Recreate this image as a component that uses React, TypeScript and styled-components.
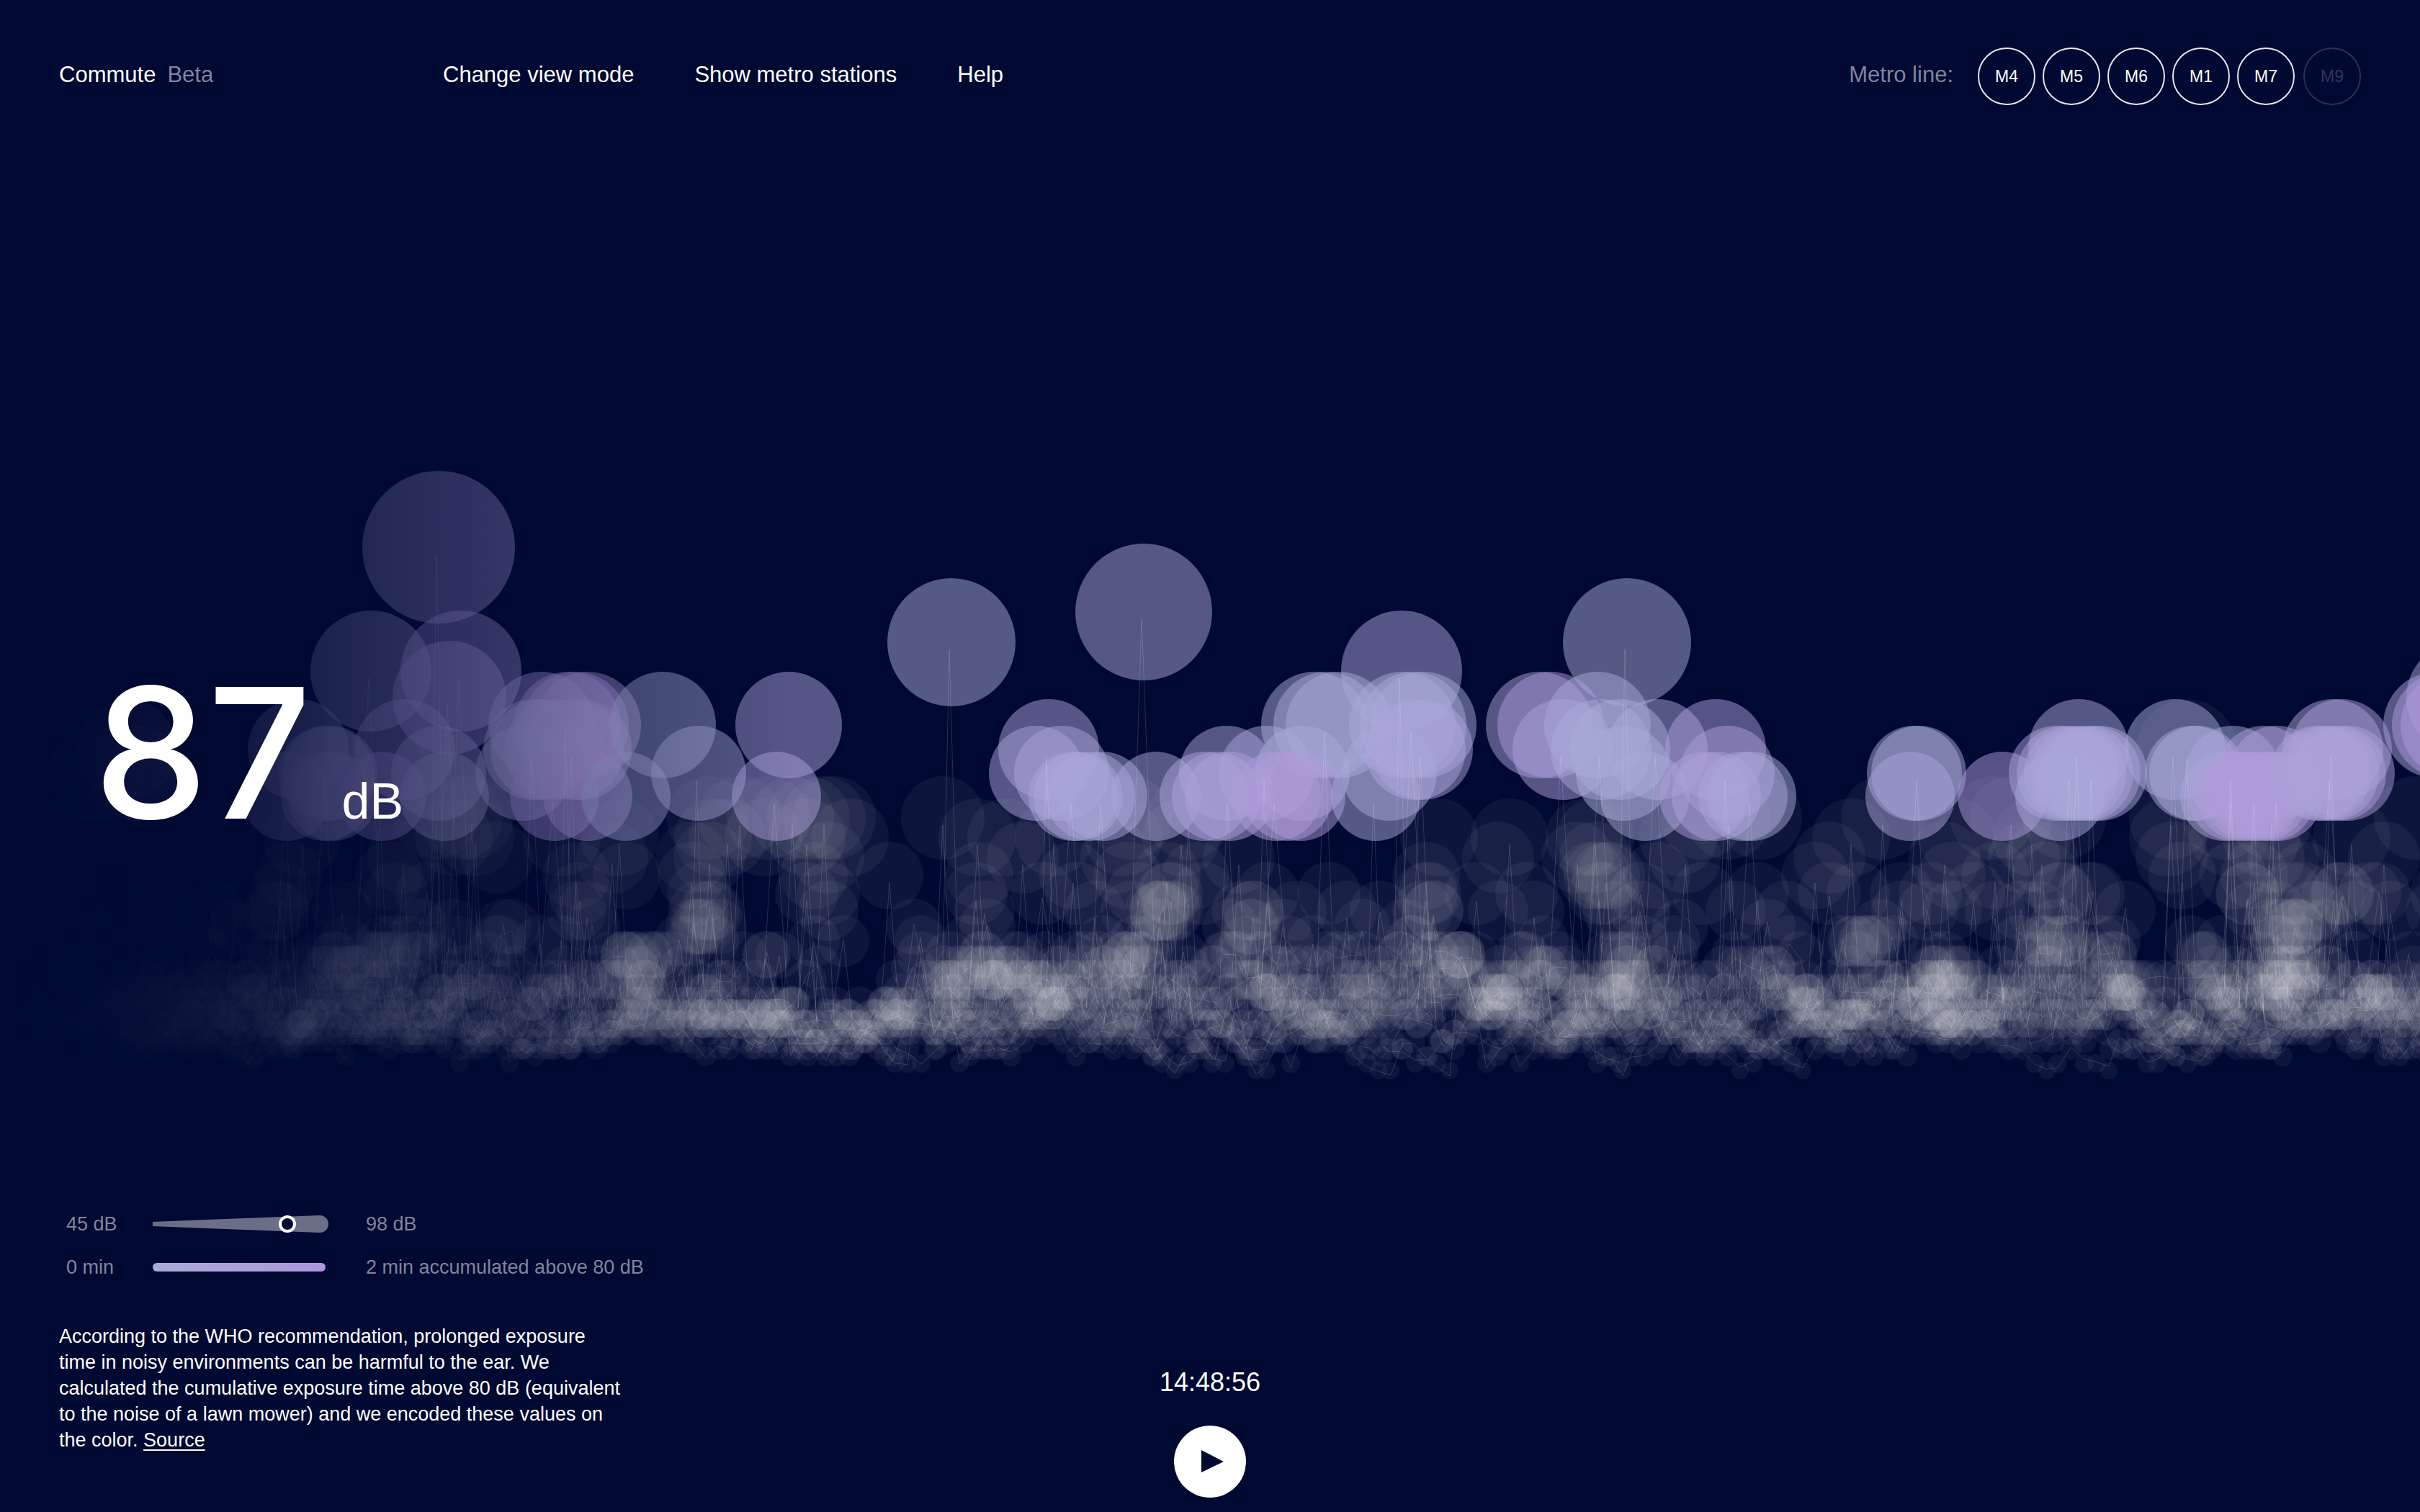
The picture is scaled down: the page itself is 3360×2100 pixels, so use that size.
import React, { useState } from "react";
import styled, { createGlobalStyle } from "styled-components";

const NIGHT = "#000932";
const MUTED = "#80849a";

const GlobalStyle = createGlobalStyle`
  *, *::before, *::after { box-sizing: border-box; }
  body {
    margin: 0;
    background: ${NIGHT};
    color: #fff;
    font-family: "Liberation Sans", Arial, sans-serif;
    font-size: 27px;
    line-height: 36px;
  }
`;

const Page = styled.div`
  min-height: 100vh;
  display: flex;
  flex-direction: column;
`;

const Header = styled.header`
  display: flex;
  align-items: center;
  padding: 66px 82px 0;
  font-size: 31px;
`;

const Brand = styled.div`
  width: 533px;
  display: flex;
  gap: 16px;
  padding-bottom: 4px;
`;

const Faint = styled.span`
  color: ${MUTED};
`;

const Nav = styled.nav`
  display: flex;
  flex: 1;
  gap: 84px;
  padding-bottom: 4px;
`;

const NavButton = styled.button`
  padding: 0;
  border: 0;
  background: none;
  color: inherit;
  font: inherit;
  cursor: pointer;
`;

const Lines = styled.div`
  display: flex;
  align-items: center;
  gap: 10px;
`;

const LinesLabel = styled(Faint)`
  margin-right: 24px;
  padding-bottom: 4px;
`;

const LineButton = styled.button`
  width: 80px;
  height: 80px;
  padding: 0;
  border: 2px solid #e6e7ec;
  border-radius: 50%;
  background: none;
  color: #fff;
  font-family: inherit;
  font-size: 23px;
  cursor: pointer;

  &:disabled {
    margin-left: 2px;
    border-color: #2b3254;
    color: #2f3657;
    cursor: default;
  }
`;

const Stage = styled.main`
  display: grid;

  & > * { grid-area: 1 / 1; }
`;

const Chart = styled.svg`
  display: block;
  width: 100%;
  height: auto;
`;

const Readout = styled.p`
  display: flex;
  align-items: baseline;
  gap: 42px;
  margin: 0;
  padding: 772px 0 0 130px;
  align-self: start;
  font-family: Inter, "Liberation Sans", sans-serif;
  font-size: 252px;
  font-weight: 500;
  line-height: 256px;
`;

const Unit = styled.span`
  font-family: "Liberation Sans", Arial, sans-serif;
  font-size: 70px;
  font-weight: 400;
  line-height: 70px;
`;

const Footer = styled.footer`
  margin-top: auto;
  display: grid;
  grid-template-columns: 1fr auto 1fr;
  align-items: end;
  padding: 0 82px 20px;
`;

const Notes = styled.section`
  padding-bottom: 62px;
`;

const Legend = styled.dl`
  display: grid;
  grid-template-columns: 120px 240px auto;
  grid-auto-rows: 36px;
  row-gap: 24px;
  align-items: center;
  justify-content: start;
  margin: 0 0 60px;
  padding-left: 10px;
  color: ${MUTED};
`;

const LegendStart = styled.dt``;

const LegendScale = styled.dd`
  margin: 0;
`;

const LegendEnd = styled.dd`
  margin: 0;
  padding-left: 56px;
`;

const ScaleDrawing = styled.svg`
  display: block;
  width: 244px;
  height: 28px;
`;

const Exposure = styled.p`
  margin: 0;
  max-width: 784px;
`;

const SourceLink = styled.a`
  color: inherit;
  text-decoration-thickness: 2px;
  text-underline-offset: 4px;
`;

const Player = styled.section`
  display: flex;
  flex-direction: column;
  align-items: center;
  gap: 40px;
`;

const Clock = styled.time`
  font-size: 36px;
  line-height: 40px;
`;

const PlayButton = styled.button`
  display: grid;
  place-items: center;
  width: 100px;
  height: 100px;
  padding: 0;
  border: 0;
  border-radius: 50%;
  background: #fff;
  cursor: pointer;
`;

/* Every loudness level has one height and one radius, loudest first. */
const LEVELS: [number, number][] = [
  [760, 106], [805, 100], [850, 95], [892, 89], [932, 84], [969, 79],
  [1007, 74], [1041, 70], [1074, 66], [1106, 62], [1136, 58], [1163, 54],
  [1191, 50], [1216, 47], [1241, 44], [1265, 42], [1287, 39], [1307, 36],
  [1326, 33], [1344, 31], [1361, 28], [1378, 26], [1394, 24], [1409, 22],
  [1422, 20], [1434, 18], [1446, 17], [1457, 15], [1467, 14], [1477, 13],
  [1487, 12], [1497, 11],
];

/* Points above 80 dB: level, x, accumulated exposure from 0 to 1. */
const LOUD: [number, number, number][] = [
  [0, 609, 0.6],
  [4, 515, 0.3], [4, 640, 0.7], [5, 624, 0.7],
  [7, 176, 0.3], [8, 132, 0.3], [8, 190, 0.3],
  [7, 414, 0.2], [7, 562, 0.6], [8, 453, 0.3], [8, 458, 0.3], [8, 609, 0.4],
  [9, 398, 0.5], [9, 452, 0.5], [9, 462, 0.3], [9, 530, 0.9], [9, 617, 0.3],
  [6, 752, 0.5], [6, 788, 1], [6, 799, 0.9], [6, 816, 1], [7, 741, 0.3],
  [7, 751, 0.5], [7, 770, 0.6], [7, 796, 0.4], [7, 807, 0.9],
  [8, 726, 0.3], [9, 770, 1], [9, 816, 1], [6, 920, 0], [8, 970, 0.2],
  [9, 869, 0.2], [6, 1095, 0.4], [9, 1078, 0.5],
  [3, 1321, 0.1], [2, 1588, 0.3], [7, 1456, 0.4], [8, 1439, 0.4],
  [8, 1474, 0.4], [9, 1490, 0.4], [9, 1497, 0.3], [9, 1514, 0.3],
  [9, 1531, 0.2], [9, 1605, 0.3], [8, 1703, 0.3], [8, 1758, 0.3],
  [9, 1672, 0.3], [9, 1689, 0.5], [9, 1707, 0.6],
  [4, 1946, 0.4], [6, 1825, 0], [6, 1842, 0.1], [6, 1859, 0.1],
  [8, 1808, 0.1], [9, 1772, 0.8], [9, 1788, 0.8], [9, 1806, 0.8],
  [9, 1910, 0.1], [8, 1929, 0.1], [6, 1947, 0.1], [6, 1962, 0.1],
  [6, 1976, 0.1], [7, 1965, 0.3], [7, 1975, 0.4],
  [6, 2137, 0.4], [6, 2153, 1], [7, 2170, 0.5], [3, 2259, 0],
  [6, 2218, 0.2], [7, 2223, 0.1], [7, 2249, 0], [8, 2254, 0], [7, 2301, 0.2],
  [9, 2284, 0.1], [7, 2382, 0.6], [8, 2398, 0.7], [9, 2366, 0.7],
  [9, 2383, 0.5], [9, 2432, 0], [9, 2420, 0.4],
  [8, 2658, 0.1], [8, 2664, 0.2], [9, 2652, 0.4], [9, 2780, 0.9],
  [7, 2886, 0.3], [8, 2855, 0.4], [8, 2866, 0.4], [8, 2876, 0.5],
  [8, 2886, 0.5], [8, 2896, 0.3], [8, 2906, 0.3], [8, 2915, 0.3],
  [9, 2860, 0.2], [7, 3020, 0.2], [8, 3044, 0.1], [8, 3050, 0.2],
  [8, 3100, 0.2], [8, 3144, 0.7], [8, 3161, 0.6], [7, 3239, 0.4],
  [7, 3251, 0.7], [9, 3089, 0.3], [9, 3100, 0.7], [9, 3112, 0.8],
  [9, 3122, 0.8], [9, 3132, 0.8], [9, 3142, 0.8], [9, 3153, 0.7],
  [9, 3163, 0.8], [8, 3218, 0.6], [8, 3226, 0.6], [8, 3237, 0.6],
  [8, 3247, 0.5], [8, 3259, 0.6], [5, 3420, 0.5], [6, 3383, 0.4],
  [6, 3395, 0.9], [6, 3407, 0.9],
];

/* Quieter points that rise above the crowd: level, then the x positions. */
const MURMUR: [number, number[]][] = [
  [7, [3036]],
  [10, [605, 640, 655, 983, 1027, 1067, 1100, 1122, 1144, 1158, 1309, 1570, 1650, 2363, 2400, 2444, 2614, 2766, 2792, 2866, 3014, 3088, 3154, 3354]],
  [11, [420, 630, 660, 780, 860, 990, 1010, 1060, 1120, 1180, 1357, 1397, 1463, 1560, 1640, 1998, 2096, 2200, 2215, 2330, 2570, 2718, 2821, 3010, 3095, 3140, 3265]],
  [12, [560, 690, 850, 960, 985, 1150, 1420, 1550, 1720, 2080, 2190, 2215, 2340, 2540, 2700, 2810, 2835, 3015, 3150, 3170, 3310]],
  [13, [400, 540, 800, 870, 960, 1130, 1235, 1360, 1490, 1565, 1620, 1660, 1980, 2210, 2230, 2300, 2520, 2710, 2770, 2840, 3030, 3100, 3130, 3200]],
  [14, [390, 550, 805, 970, 1120, 1150, 1355, 1495, 1580, 1622, 1626, 1670, 1760, 1845, 1980, 1985, 2050, 2120, 2220, 2365, 2440, 2580, 2640, 2680, 2740, 2860, 3120, 3180, 3240, 3290]],
  [15, [380, 800, 815, 970, 990, 1150, 1520, 1570, 1610, 1625, 1740, 1800, 1870, 1975, 1990, 2080, 2130, 2240, 2410, 2480, 2640, 2710, 2770, 2830, 3130, 3160, 3210, 3270]],
];

/* Loud stretches of platform noise: x, first level, last level, points. */
const BURSTS: [number, number, number, number][] = [
  [480, 17, 19, 8], [550, 17, 19, 7], [880, 18, 20, 10], [890, 20, 22, 8],
  [975, 14, 18, 6], [415, 22, 26, 12], [1330, 18, 22, 12], [1395, 19, 20, 10],
  [1355, 17, 19, 5], [1440, 21, 24, 8], [1240, 22, 24, 7],
  [1060, 23, 24, 10], [990, 22, 24, 7], [1555, 18, 21, 8],
  [1590, 17, 19, 4], [1620, 14, 15, 3], [1725, 15, 18, 7],
  [1780, 20, 22, 6], [1890, 20, 22, 6], [1840, 23, 24, 6],
  [2090, 19, 23, 10], [2160, 18, 20, 5], [2135, 18, 18, 2],
  [2252, 17, 22, 20], [2225, 13, 14, 3], [2190, 22, 24, 8],
  [2500, 20, 22, 7], [2590, 16, 18, 8], [2560, 22, 23, 7],
  [2705, 18, 25, 26], [2690, 20, 21, 6], [2850, 16, 18, 5],
  [2945, 20, 21, 7], [3065, 17, 18, 5], [3085, 20, 23, 7],
  [3175, 16, 23, 26], [3140, 26, 27, 5], [3310, 21, 23, 7],
  [3205, 14, 17, 4],
];

const makeRandom = (seed: number) => () => {
  seed = (seed * 1664525 + 1013904223) >>> 0;
  return seed / 4294967296;
};

const clamp = (n: number, low: number, high: number) =>
  Math.max(low, Math.min(high, n));

type Dot = { x: number; y: number; r: number };

const buildRecording = () => {
  const random = makeRandom(4519);
  const dots: Dot[] = [];
  const paths: string[] = [];
  const addDot = (level: number, x: number) => {
    const [y, r] = LEVELS[clamp(Math.round(level), 0, LEVELS.length - 1)];
    dots.push({ x: Math.round(x), y, r });
    return y;
  };

  for (let ride = 0; ride < 10; ride += 1) {
    const phase = random() * 6;
    let drift = 0;
    let x = -10 + random() * 17;
    const points: string[] = [];
    while (x < 3390) {
      drift = drift * 0.75 + (random() - 0.5) * 5.4;
      let level = 23.4 + drift + 1.6 * Math.sin(x / 95 + phase);
      if (random() < 0.12) level -= random() * 9;
      if (level < 18) level = 18 - (18 - level) * 0.7;
      level = clamp(level, 14, 31);
      const y = addDot(level, x);
      points.push(`${Math.round(x)},${Math.round(y + (random() - 0.5) * 14)}`);
      x += 15 + random() * 4;
    }
    paths.push(points.join(" "));
  }

  BURSTS.forEach(([x, first, last, count]) => {
    for (let i = 0; i < count; i += 1) {
      addDot(first + random() * (last - first), x + (random() - 0.5) * 48);
    }
  });

  MURMUR.forEach(([level, xs]) => {
    xs.forEach((x, i) => {
      const y = addDot(level, x);
      if (i % 2 === 0) {
        paths.push(`${x - 12},1400 ${x},${y + 10} ${x + 14},1420`);
      }
    });
  });

  LOUD.forEach(([level, x], i) => {
    if (level < 6 || i % 3 === 0) {
      const y = LEVELS[level][0] + 10;
      const lean = Math.round(random() * 12);
      paths.push(`${x - 10 - lean},1380 ${x - 3},${y} ${x + 8 + lean},1400`);
    }
  });

  return { dots, paths };
};

const RECORDING = buildRecording();

const tint = (exposure: number) => {
  const mix = (from: number, to: number) =>
    Math.round(from + (to - from) * exposure);
  return `rgb(${mix(167, 174)}, ${mix(172, 152)}, ${mix(214, 219)})`;
};

const NoiseChart = () => (
  <Chart viewBox="0 146 3360 1400" role="img" aria-label="Noise recorded along the metro lines">
    <defs>
      <linearGradient id="fade" x1="0" x2="1" y1="0" y2="0">
        <stop offset="0" stopColor={NIGHT} />
        <stop offset="0.12" stopColor={NIGHT} stopOpacity="0.97" />
        <stop offset="0.25" stopColor={NIGHT} stopOpacity="0.88" />
        <stop offset="0.36" stopColor={NIGHT} stopOpacity="0.74" />
        <stop offset="0.47" stopColor={NIGHT} stopOpacity="0.59" />
        <stop offset="1" stopColor={NIGHT} stopOpacity="0" />
      </linearGradient>
    </defs>
    <g fill="#f4f2f2" fillOpacity="0.053">
      {RECORDING.dots.map((dot, i) => (
        <circle key={i} cx={dot.x} cy={dot.y} r={dot.r} />
      ))}
    </g>
    <g fillOpacity="0.5">
      {LOUD.map(([level, x, exposure], i) => (
        <circle key={i} cx={x} cy={LEVELS[level][0]} r={LEVELS[level][1]} fill={tint(exposure)} />
      ))}
    </g>
    <g fill="none" stroke="#fff" strokeOpacity="0.15" strokeWidth="1">
      {RECORDING.paths.map((points, i) => (
        <polyline key={i} points={points} />
      ))}
    </g>
    <rect x="0" y="146" width="1104" height="1400" fill="url(#fade)" />
  </Chart>
);

const METRO_LINES = ["M4", "M5", "M6", "M1", "M7", "M9"];

export default function App() {
  const [playing, setPlaying] = useState(false);

  return (
    <Page>
      <GlobalStyle />
      <Header>
        <Brand>
          <span>Commute</span>
          <Faint>Beta</Faint>
        </Brand>
        <Nav>
          <NavButton type="button">Change view mode</NavButton>
          <NavButton type="button">Show metro stations</NavButton>
          <NavButton type="button">Help</NavButton>
        </Nav>
        <Lines role="group" aria-labelledby="lines-label">
          <LinesLabel id="lines-label">Metro line:</LinesLabel>
          {METRO_LINES.map((line) => (
            <LineButton key={line} type="button" disabled={line === "M9"}>
              {line}
            </LineButton>
          ))}
        </Lines>
      </Header>

      <Stage>
        <NoiseChart />
        <Readout>
          <span>87</span>
          <Unit>dB</Unit>
        </Readout>
      </Stage>

      <Footer>
        <Notes>
          <Legend>
            <LegendStart>45 dB</LegendStart>
            <LegendScale>
              <ScaleDrawing viewBox="0 0 244 28" aria-hidden="true">
                <path d="M0 11 L232 2 A12 12 0 0 1 232 26 L0 17 Z" fill="#6a6e86" />
                <circle cx="187" cy="14" r="10" fill={NIGHT} stroke="#fff" strokeWidth="4" />
              </ScaleDrawing>
            </LegendScale>
            <LegendEnd>98 dB</LegendEnd>
            <LegendStart>0 min</LegendStart>
            <LegendScale>
              <ScaleDrawing viewBox="0 0 244 28" aria-hidden="true">
                <defs>
                  <linearGradient id="exposure">
                    <stop offset="0" stopColor="#aaabd9" />
                    <stop offset="1" stopColor="#ad96da" />
                  </linearGradient>
                </defs>
                <rect x="0" y="8" width="240" height="12" rx="6" fill="url(#exposure)" />
              </ScaleDrawing>
            </LegendScale>
            <LegendEnd>2 min accumulated above 80 dB</LegendEnd>
          </Legend>
          <Exposure>
            According to the WHO recommendation, prolonged exposure time in
            noisy environments can be harmful to the ear. We calculated the
            cumulative exposure time above 80 dB (equivalent to the noise of a
            lawn mower) and we encoded these values on the color.{" "}
            <SourceLink href="#source">Source</SourceLink>
          </Exposure>
        </Notes>
        <Player>
          <Clock>14:48:56</Clock>
          <PlayButton
            type="button"
            aria-label={playing ? "Pause" : "Play"}
            onClick={() => setPlaying(!playing)}
          >
            <svg width="40" height="32" viewBox="0 0 40 32" aria-hidden="true">
              <path d="M8 0 L39 16 L8 31 Z" fill={NIGHT} />
            </svg>
          </PlayButton>
        </Player>
      </Footer>
    </Page>
  );
}
